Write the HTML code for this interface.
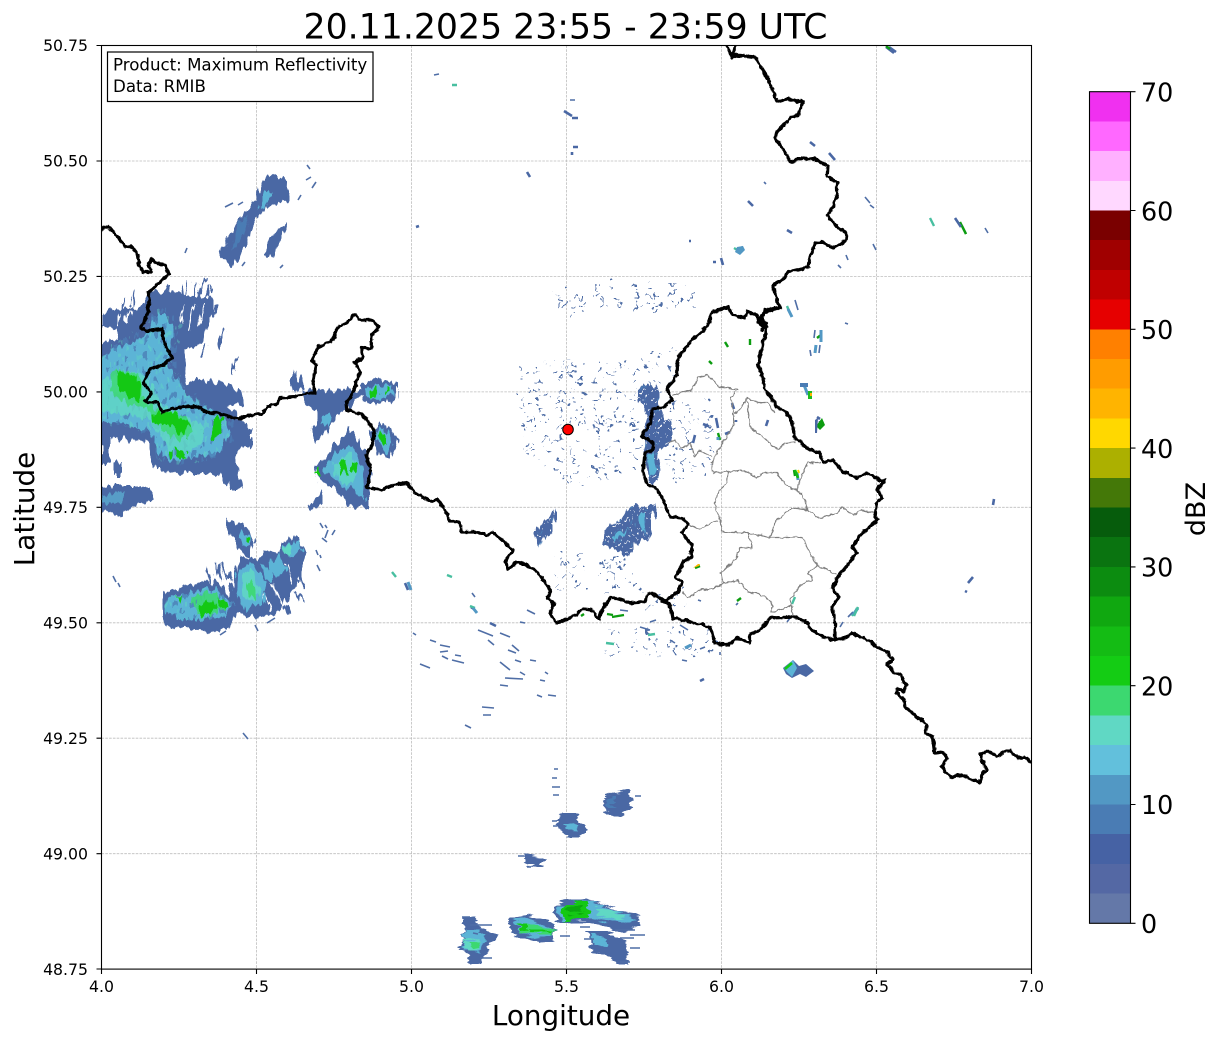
<!DOCTYPE html>
<html><head><meta charset="utf-8"><title>Radar</title>
<style>
html,body{margin:0;padding:0;background:#fff}
svg{display:block}
text{font-family:"DejaVu Sans","Liberation Sans",sans-serif;fill:#000}
.tk{font-size:15.7px}
.cb{font-size:25.4px}
.bl{fill:#4a68a4;stroke:#4a68a4;stroke-width:2}
.bm{fill:#4a7cb4}
.cy{fill:#5cb4d6}
.te{fill:#60d8c4}
.lg{fill:#3cd870}
.gr{fill:#14c814}
.dg{fill:#0aa80e}
.s{fill:none;stroke:#4f6ea6;stroke-width:1.6}
.s2{fill:none;stroke:#4a68a4;stroke-width:2.6}
.st{fill:none;stroke:#48bfa0;stroke-width:2.4}
.sc{fill:none;stroke:#5298c4;stroke-width:3}
.sg{fill:none;stroke:#0c9c10;stroke-width:2.4}
.wh{fill:none;stroke:#fff;stroke-width:1.5}
.ly{fill:none;stroke:#808080;stroke-width:1.2;stroke-linejoin:round}
.bd{fill:none;stroke:#000;stroke-width:3.2;stroke-linejoin:round;stroke-linecap:round}
</style></head><body>
<svg xmlns="http://www.w3.org/2000/svg" width="1219" height="1040" viewBox="0 0 1219 1040">
<defs>
<clipPath id="ax"><rect x="101.5" y="45.5" width="930" height="923.6"/></clipPath>
<filter id="rv" filterUnits="userSpaceOnUse" x="60" y="20" width="1010" height="990" color-interpolation-filters="sRGB">
<feTurbulence type="fractalNoise" baseFrequency="0.22 0.05" numOctaves="2" seed="4"/>
<feDisplacementMap in="SourceGraphic" scale="13" xChannelSelector="R" yChannelSelector="G"/>
</filter>
<filter id="rh" filterUnits="userSpaceOnUse" x="60" y="20" width="1010" height="990" color-interpolation-filters="sRGB">
<feTurbulence type="fractalNoise" baseFrequency="0.04 0.28" numOctaves="2" seed="9"/>
<feDisplacementMap in="SourceGraphic" scale="11" xChannelSelector="R" yChannelSelector="G"/>
</filter>
<filter id="rs" filterUnits="userSpaceOnUse" x="60" y="20" width="1010" height="990" color-interpolation-filters="sRGB">
<feTurbulence type="fractalNoise" baseFrequency="0.14" numOctaves="2" seed="2"/>
<feDisplacementMap in="SourceGraphic" scale="22" xChannelSelector="R" yChannelSelector="G"/>
</filter>
<filter id="rb" filterUnits="userSpaceOnUse" x="60" y="20" width="1010" height="990" color-interpolation-filters="sRGB">
<feTurbulence type="fractalNoise" baseFrequency="0.2" numOctaves="2" seed="7"/>
<feDisplacementMap in="SourceGraphic" scale="4" xChannelSelector="R" yChannelSelector="G"/>
</filter>
<pattern id="sp" width="37" height="29" patternUnits="userSpaceOnUse">
<g fill="#4f6ea6"><rect x="2" y="3" width="4" height="2"/><rect x="22" y="5" width="5" height="2"/><rect x="7" y="12" width="2.4" height="3.2"/><rect x="27" y="15" width="2.4" height="2.6"/><rect x="3" y="23" width="5" height="2"/><rect x="17" y="24" width="3.4" height="2"/><rect x="14" y="13" width="3" height="2"/></g>
</pattern>
<pattern id="spd" width="13" height="11" patternUnits="userSpaceOnUse">
<rect width="13" height="11" fill="#4a68a4"/><g fill="#fff"><rect x="2" y="2" width="2" height="1"/><rect x="9" y="1" width="1" height="2"/><rect x="5" y="7" width="2" height="1"/><rect x="11" y="8" width="1" height="1"/></g><rect x="6" y="3" width="3" height="2" fill="#4a7cb4"/>
</pattern>
<pattern id="tx" width="19" height="15" patternUnits="userSpaceOnUse">
<g fill="#4a7cb4" opacity=".75"><rect x="1" y="1" width="4" height="6"/><rect x="11" y="8" width="3" height="6"/></g><rect x="15" y="2" width="2" height="5" fill="#60d8c4" opacity=".5"/><rect x="6" y="10" width="3" height="4" fill="#60d8c4" opacity=".4"/>
</pattern>
</defs>

<!-- grid -->
<g stroke="#bdbdbd" stroke-width="0.8" stroke-dasharray="2.6 1.2" fill="none">
<path d="M256.5 45.5V969M411.5 45.5V969M566.5 45.5V969M721.5 45.5V969M876.5 45.5V969"/>
<path d="M101.5 161H1031.5M101.5 276.4H1031.5M101.5 391.9H1031.5M101.5 507.3H1031.5M101.5 622.8H1031.5M101.5 738.2H1031.5M101.5 853.7H1031.5"/>
</g>

<g clip-path="url(#ax)">
<!-- speckle fields -->
<g filter="url(#rs)">
<path fill="url(#sp)" d="M518 372L560 362L635 358L640 470L610 482L560 478L525 450Z"/>
<path fill="url(#sp)" d="M558 292L620 278L700 288L700 312L630 305L565 318Z"/>
<path fill="url(#sp)" d="M640 345L675 345L668 400L640 400Z"/>
<path fill="url(#sp)" d="M665 400L712 400L716 470L672 482Z"/>
<path fill="url(#sp)" d="M558 548L590 548L585 590L560 590Z"/>
<path fill="url(#sp)" d="M592 558L625 555L640 590L606 595Z"/>
<path fill="url(#sp)" d="M600 628L720 632L715 660L610 658Z"/>
<path fill="url(#sp)" d="M640 590L690 590L680 612L650 612Z"/>
</g>

<!-- north / west echoes, radial near-vertical streaks -->
<g filter="url(#rv)">
<path class="bl" d="M101 313L120 310L143 307L150 293L170 293L190 296L213 300L213 313L200 343L183 350L185 383L213 387L227 407L250 430L250 443L233 457L242 487L230 487L220 473L190 473L160 470L153 460L147 440L110 437L110 462L101 462Z"/>
<path d="M101 328L115 326L118 340L101 342Z" fill="#fff"/>
<path class="wh" d="M185 305l-5 20M195 305l-8 25M205 305l-8 22M120 312l-3 12M130 310l-4 12M196 385l4 0"/>
<path class="cy" d="M101 357L143 337L160 312L172 325L170 367L183 390L207 410L224 414L228 438L213 455L173 461L160 455L150 430L107 422L101 422Z"/>
<path fill="url(#tx)" d="M101 350L143 330L160 305L180 318L176 370L187 392L210 408L230 413L233 440L215 460L173 465L157 460L150 433L107 425L101 425Z"/>
<path class="te" d="M101 380L135 372L148 378L160 400L172 412L205 425L200 445L175 455L162 440L150 420L115 412L101 410Z" opacity=".8"/>
<path class="lg" d="M112 372L140 374L143 395L152 408L185 415L195 432L178 440L160 428L148 410L125 403L110 390Z" opacity=".8"/>
<path class="gr" d="M117 373L138 377L140 390L138 402L123 393L117 387Z"/>
<path class="gr" d="M152 412L173 413L190 423L187 437L177 433L167 423L153 422Z"/>
<path class="gr" d="M215 417L223 417L220 433L213 443L210 437Z"/>
<path class="gr" d="M173 450L187 452L187 458L173 458Z"/>
<path class="bl" d="M101 487L147 487L152 500L127 507L123 515L101 508Z"/>
<path class="cy" d="M101 495L125 493L122 503L101 503Z" opacity=".7"/>
<path class="bl" d="M116 463L121 463L121 476L116 476Z"/>
<path class="bl" d="M185 383L200 380L222 384L242 392L243 402L225 404L210 388Z"/>
<path class="bl" d="M231 393L241 393L243 405L233 404Z"/>
<path class="s2" d="M125 300l-4 14M135 292l-5 14M170 285l-3 10M188 280l-5 16M198 285l-6 16M205 277l-6 20M210 287l-5 14M218 305l-3 10M222 335l-3 8M225 330l-3 9M205 345l-3 10M220 340l-3 10M236 358l-2 15"/>
<path class="bl" d="M270 175L288 182L287 200L263 208L248 230L245 247L233 265L223 257L227 240L240 220L257 200L262 183Z"/>
<path class="cy" d="M263 195L272 190L266 206L258 208Z"/>
<path class="bm" d="M240 222L248 215L242 238L232 250L235 235Z"/>
<path class="bl" d="M288 223L278 243L270 257L263 253L272 237Z"/>
<path class="bl" d="M290 380L297 372L302 390L293 393Z"/>
<path class="bl" d="M302 393L325 392L350 390L362 393L347 407L337 413L328 430L317 440L313 430L320 413L307 403Z"/>
<path class="cy" d="M323 415L332 416L328 428L320 425Z"/>
<path class="bl" d="M360 386L377 379L396 385L396 398L377 403L362 399Z"/>
<path class="cy" d="M364 388L380 385L394 388L394 396L378 400L365 397Z"/>
<path class="gr" d="M369 390L376 388L378 395L371 398Z"/>
<path class="gr" d="M386 388L392 389L392 394L386 395Z"/>
<path class="bl" d="M370 430L383 425L398 440L390 456L378 453L374 440Z"/>
<path class="cy" d="M374 432L384 428L393 442L385 452L378 445Z"/>
<path class="gr" d="M378 434L386 433L386 444L380 442Z"/>
<path class="bl" d="M315 470L333 450L350 430L363 447L370 470L370 511L353 505L333 487L320 480Z"/>
<path class="cy" d="M325 468L340 450L352 445L362 468L366 500L350 490L335 480Z"/>
<path class="te" d="M333 465L350 452L358 470L352 485L338 480Z" opacity=".8"/>
<path class="gr" d="M340 461L346 460L348 472L340 476Z"/>
<path class="gr" d="M352 462L358 464L357 472L352 470Z"/>
<path class="gr" d="M316 470L320 468L320 476L316 476Z"/>
<path class="bl" d="M310 507L320 495L323 503L315 510Z"/>
<path class="bl" d="M162 593L183 588L195 587L205 582L220 583L230 600L235 580L240 558L260 560L265 550L280 557L283 543L297 537L305 553L297 587L283 603L277 610L257 617L240 610L227 627L207 630L183 627L167 625L163 617Z"/>
<path class="wh" d="M272 582l10 22M285 565l8 20M262 590l8 20"/>
<path class="cy" d="M168 597L187 593L217 588L233 605L223 617L200 620L177 620L167 610Z"/>
<path fill="url(#tx)" d="M168 597L187 593L217 588L233 605L223 617L200 620L177 620L167 610Z"/>
<path class="lg" d="M192 596L216 592L228 606L213 616L197 616Z" opacity=".85"/>
<path class="gr" d="M200 605L213 600L217 610L207 617L202 613Z"/>
<path class="gr" d="M218 597L227 603L228 610L220 608Z"/>
<path class="gr" d="M177 596L182 596L181 603Z"/>
<path class="cy" d="M237 573L250 563L267 583L263 603L247 608L235 593Z"/>
<path class="cy" d="M268 562L280 556L285 570L275 578Z"/>
<path class="te" d="M243 575L252 572L262 590L254 603L245 598Z" opacity=".85"/>
<path class="lg" d="M247 580L257 587L258 600L248 597Z" opacity=".9"/>
<path class="cy" d="M262 565L272 568L274 580L266 580Z"/>
<path class="bl" d="M227 520L247 527L253 543L250 557L237 547L233 533Z"/>
<path class="cy" d="M240 535L250 533L252 545L243 547Z"/>
<path class="gr" d="M246 537L250 537L250 543L246 543Z"/>
<path class="cy" d="M283 545L300 540L302 550L290 557Z"/>
<path class="te" d="M284 546L290 544L292 552L287 555Z"/>
<path class="s2" d="M165 590l4 8M185 585l6 8M207 568l4 14M217 563l4 16M222 562l5 18M228 573l3 8M300 580l6 9M296 593l8 9M285 605l4 8"/>
<path fill="url(#spd)" d="M638 390L653 383L658 393L660 410L670 423L670 443L660 450L657 483L647 483L643 453L648 413L640 403Z"/>
<path class="cy" d="M647 455L654 452L656 470L650 476Z"/>
<path fill="url(#spd)" d="M600 545L610 528L627 513L635 505L653 507L653 537L637 543L627 557L613 550Z"/>
<path class="cy" d="M612 537L630 528L625 534L615 541Z"/>
<path class="cy" d="M637 515L643 513L645 530L640 532Z"/>
<path fill="url(#spd)" d="M533 533L545 520L555 512L552 530L540 545Z"/>
</g>

<!-- southern echoes, radial near-horizontal streaks -->
<g filter="url(#rh)">
<path class="bl" d="M605 797L615 792L629 791L630 805L622 815L607 812Z"/>
<path class="bm" d="M607 798L615 795L615 806L608 806Z"/>
<path class="bl" d="M558 818L565 813L576 813L578 823L584 826L584 832L577 836L564 836L562 830L558 827Z"/>
<path class="cy" d="M565 822L576 824L577 831L566 830Z"/>
<path class="bl" d="M525 856L545 859L540 866L528 865Z"/>
<path class="bl" d="M556 904L563 901L587 899L603 906L623 913L639 916L639 924L623 932L607 926L587 921L563 922L556 919Z"/>
<path class="cy" d="M557 905L590 901L625 914L638 920L622 924L590 918L560 920Z"/>
<path class="te" d="M596 907L610 909L625 917L618 921L597 917Z"/>
<path class="gr" d="M563 903L588 903L588 917L563 921Z"/>
<path class="dg" d="M566 906L582 905L582 912L568 914Z"/>
<path class="bl" d="M511 919L527 916L552 923L552 939L540 943L521 936L511 930Z"/>
<path class="cy" d="M514 921L527 918L551 928L551 936L537 939L520 932Z"/>
<path class="lg" d="M518 923L528 923L553 930L552 935L533 935L520 932Z"/>
<path class="gr" d="M519 923L527 923L527 931L520 930Z"/>
<path class="gr" d="M527 929L552 931L552 933L530 933Z"/>
<path class="bl" d="M589 931L607 931L626 944L626 956L627 964L620 964L610 957L591 949Z"/>
<path class="cy" d="M590 935L607 937L607 946L592 945Z"/>
<path class="bl" d="M464 918L474 916L477 927L497 935L488 946L483 962L469 964L468 953L461 950L464 937Z"/>
<path class="cy" d="M464 930L478 930L486 940L480 952L464 950Z"/>
<path class="te" d="M462 941L480 938L480 950L470 952Z"/>
<path class="lg" d="M470 941L480 942L480 948L473 949Z"/>
</g>
<path class="s" d="M552 787h8M553 795h6M552 778h5M554 769h4M635 796h6M557 821h-5M557 826h-4M518 856h6M527 867h4M492 925h-22M478 934l-5-1M492 958h-12M470 917h-8M584 939h10M560 936h10M620 938h14M630 935h15M630 948h10M630 962h-10M615 930h20M580 927h10"/>
<!-- small fringe echoes -->
<path class="s" d="M307 165l3 4M306 180l5-3M316 182l-4 6M298 200l3-5M225 207l8-4M238 205l5-3M187 248l-2 5M245 262l-3 4M280 268l3-3M320 523l3 5M328 530l-3 8M322 538l5 4M316 550l2 5M317 565l3 6M325 525l2 3M332 535l3-5M320 555l1 3M113 576l3 6M118 583l2 4M243 733l5 6M275 618l-8 5M255 625l3 6M220 635l6-4"/>
<!-- isolated echoes -->
<path class="s2" d="M889 47l7 5M564 111l8 5M572 118l6 0M573 147l5 0M572 152l0 3M527 172l3 5M829 153l6 7M810 142l5 4M748 201l5 5M737 250l6-3M787 230l5 3M721 258l2 7M713 262l3 0M689 241l2 0M416 227l3-1M968 583l5-6M967 592l-2-1M993 505l1-6M700 681l4-2M408 590l-3-7M471 607l3 2M490 623l6 3"/>
<path class="s" d="M434 75l5-1M570 100h5M865 197l5 6M870 205l4 3M873 244l3 6M838 265l3 3M846 255l2 5M795 300l3 10M815 330l-1 8M820 345l-1 8M845 323l3 1M985 228l3 5M766 184l-2-2M472 593l3 4M620 610l8 1M810 350l1 6M853 612l-5 5M843 622l-3 5M413 633l3 2M420 664l10 4M442 656l6 3M452 660l12 3M478 630l15 6M500 633l10 4M512 645l7 6M500 662l10 8M520 672l5 3M505 678l18 1M537 695l5 2M548 695l8 1M482 707l12 1M483 715l8 0M465 725l6 3M440 652l8-1M430 640l6 2M488 640l6 5M520 622l5 1M527 610l8 4M700 649l5-2M713 640l5 2M680 625l8 5M640 627l10 3M650 622l6-2M670 640l5 3M720 655l0-3M698 600l3 1M787 622l3-4M736 605l2-2M682 660l5 1M440 645l10 2M455 655l6 1M508 650l8 3M515 660l6 2M530 660l6 1M500 685l8 1M540 680l5 1M545 672l3 2"/>
<path class="st" d="M930 218l4 8M452 85l5 0M857 608l-3 6M856 610l-4 6M606 643l8 1M648 635l7-1M470 606l5 2M787 306l2 5M392 572l4 5M447 575l5 2"/>
<path class="sg" d="M960 222l6 12M750 339l0 6M725 342l3 5M709 361l3 3M737 601l4-3M607 614l6 1M794 470l1 6M700 566l-5 2M817 338l4-3M612 617l12-2M584 614l-3 2M718 433l2 7"/>
<path class="sc" d="M804 385l4 10M821 330l0 12M816 345l-1 8M858 608l-5 7M473 608l4 5M797 472l1 8M408 582l3 8M788 309l4 8M691 645l-6 3M718 437l0 3"/>
<path class="st" d="M858 607l-4 9M734 248l5 3M795 597l-3 7"/>
<path class="s2" d="M955 218l6 9M886 47l8 6M732 403l2 6M768 420l-2 6M736 420l0 2M716 418l2 10M820 427l0-6M703 424l5 2M817 417l3 2M695 435l-2 8M725 434l5-2"/>
<path class="sg" d="M886 46l4 3M962 226l4 8"/>
<rect x="800" y="383" width="8" height="4" fill="#4a7cb4"/>
<rect x="808" y="391" width="4" height="8" fill="#1dbb20"/>
<rect x="810" y="393" width="2" height="3" fill="#ffb400"/>
<path d="M816 426L822 418L825 425L820 430Z" fill="#0c9c10"/>
<path d="M815 420L818 418L817 433L815 433Z" fill="#4a68a4"/>
<path d="M693 568l6-2l1 -2l-2 0z" fill="#ffb400"/>
<path d="M795 470l3 8" stroke="#12bb12" stroke-width="2.5"/>
<path d="M798 470l1 3" stroke="#ffd800" stroke-width="2"/>
<path d="M783 668L793 660L799 666L806 664L814 671L806 677L800 674L792 678L786 674Z" fill="#4a68a4"/>
<path d="M784 668L793 660L797 668L792 677L787 672Z" fill="#5cb4d6"/>
<path d="M785 669l7-6" stroke="#14c814" stroke-width="2.5"/>
<path d="M737 247L743 246L745 250L740 255L735 252Z" fill="#5298c4"/>
</g>

<!-- admin boundaries -->
<g class="ly" filter="url(#rb)">
<path d="M673 395L692 390L698 377L708 375L720 387L738 390L731 397L733 413L734 425L720 447L712 462L713 473L728 472"/>
<path d="M734 413L738 412L747 398L758 403L768 403L775 413"/>
<path d="M747 398L750 427L763 437L778 450L785 443L795 442"/>
<path d="M668 443L675 440L682 449L690 443L695 457L700 450L712 457"/>
<path d="M728 472L742 470L748 472L757 478L763 473L777 473L782 480L788 487L797 490L803 472L807 463L820 463"/>
<path d="M797 490L805 500L807 510"/>
<path d="M728 472L727 483L718 492L715 505L720 520L722 532L748 533L770 537L775 523L785 513L793 508L807 510L820 518L837 513L842 507L853 515L862 510L875 513"/>
<path d="M687 525L700 529L718 520"/>
<path d="M770 537L802 537L810 553L817 565L838 575"/>
<path d="M748 533L752 548L740 548L735 560L721 573L723 583L738 580L748 592L763 595L773 605L770 613L792 605L793 617"/>
<path d="M723 583L715 588L700 590L688 598L683 592"/>
<path d="M817 565L808 573L813 580L800 585L790 600L792 605"/>
</g>

<!-- national borders -->
<g clip-path="url(#ax)"><g class="bd" filter="url(#rb)">
<path d="M101 229L108 226L115 234L125 246L132 247L138 255L139 265L143 272L152 272L148 263L152 259L157 264L165 265L169 274L160 282L148 293L150 300L147 315L141 328L147 331L162 329L164 342L172 358L163 365L150 369L143 383L152 393L145 401L158 403L162 412L182 407L197 406L208 413L218 413L238 419L250 415L262 414L268 406L277 404L280 398L295 397L307 393L315 393L313 380L316 365L312 360L318 347L333 340L337 328L348 322L355 314L359 320L372 320L379 327L372 335L371 349L362 347L362 358L355 362L360 372L357 380L352 395L346 403L347 410L362 414L374 430L373 443L366 455L371 470L367 487L382 490L393 485L407 483L415 493L430 501L438 500L448 515L449 522L457 522L460 523L462 532L475 532L487 535L493 532L513 550L506 560L508 569L517 562L533 568L545 582L551 592L548 598L554 605L550 613L556 623L573 617L583 609L592 610L599 619L602 610L610 598L617 598L630 603L645 602L648 593L655 595L665 602L670 605L673 618L692 622L710 627L715 643L728 645L737 638L750 643L750 635L760 630L770 618L795 617L805 621L812 630L823 637L833 640L845 638L852 633L862 638L865 638L877 647L888 653L893 659L887 665L895 673L902 675L903 682L907 685L903 692L897 688L896 693L904 700L905 707L913 714L927 724L925 733L933 737L935 753L943 752L947 758L942 767L950 777L962 775L980 783L983 773L987 770L982 760L980 755L987 751L997 756L1008 750L1018 758L1025 757L1035 766"/>
<path d="M835 640L835 620L832 607L839 597L832 588L838 577L857 553L852 547L862 533L878 520L875 517L877 503L882 498L877 490L885 480L879 480L867 473L857 478L843 472L833 460L823 463L820 453L810 450L795 438L792 422L787 413L777 407L773 400L765 390L763 378L758 365L762 347L767 327L758 323L763 313L778 308L765 310L762 322L767 323L762 330"/>
<path d="M725 40L732 58L735 47M732 58L735 55L755 57L762 68L768 79L774 93L777 102L788 99L803 102L798 115L790 118L777 132L775 138L782 147L790 162L803 158L815 159L828 166L827 177L837 182L837 195L833 207L827 215L837 227L847 233L846 241L833 248L822 242L815 243L810 257L808 267L800 269L788 272L783 280L773 285L778 303L780 308"/>
<path d="M663 602L678 592L682 583L676 577L683 562L691 557L692 545L682 533L688 524L682 518L670 517L662 497L655 487L647 485L643 470L645 453L653 450L653 443L642 436L650 423L653 409L663 407L672 400L667 388L677 375L678 358L692 340L700 333L707 327L712 312L728 307L733 315L745 318L747 312L757 315L760 322"/>
</g></g>

<!-- axes -->
<rect x="101.5" y="45.5" width="930" height="923.6" fill="none" stroke="#000" stroke-width="1.1"/>
<g stroke="#000" stroke-width="1.1" fill="none">
<path d="M101.5 969v5M256.5 969v5M411.5 969v5M566.5 969v5M721.5 969v5M876.5 969v5M1031.5 969v5"/>
<path d="M96.5 45.5h5M96.5 161h5M96.5 276.4h5M96.5 391.9h5M96.5 507.3h5M96.5 622.8h5M96.5 738.2h5M96.5 853.7h5M96.5 969h5"/>
</g>
<g class="tk" text-anchor="end">
<text x="88" y="51">50.75</text><text x="88" y="166.5">50.50</text><text x="88" y="282">50.25</text><text x="88" y="397.5">50.00</text><text x="88" y="513">49.75</text><text x="88" y="628.5">49.50</text><text x="88" y="744">49.25</text><text x="88" y="859.5">49.00</text><text x="88" y="975">48.75</text>
</g>
<g class="tk" text-anchor="middle">
<text x="101.5" y="992">4.0</text><text x="256.5" y="992">4.5</text><text x="411.5" y="992">5.0</text><text x="566.5" y="992">5.5</text><text x="721.5" y="992">6.0</text><text x="876.5" y="992">6.5</text><text x="1031.5" y="992">7.0</text>
</g>
<text x="565.5" y="38.5" text-anchor="middle" font-size="34.7">20.11.2025 23:55 - 23:59 UTC</text>
<text x="561" y="1025" text-anchor="middle" font-size="27.8">Longitude</text>
<text transform="translate(34,509) rotate(-90)" text-anchor="middle" font-size="27.8">Latitude</text>

<!-- info box -->
<rect x="107.5" y="52" width="265.5" height="49.5" fill="#fff" stroke="#000" stroke-width="1.2"/>
<text x="113" y="70.5" font-size="16.65">Product: Maximum Reflectivity</text>
<text x="113" y="92" font-size="16.65">Data: RMIB</text>

<!-- radar marker -->
<circle cx="568" cy="429.5" r="5.3" fill="#f00" stroke="#000" stroke-width="1"/>

<!-- colorbar -->
<g shape-rendering="crispEdges">
<rect x="1089.5" y="893.6" width="41" height="29.7" fill="#6478a8"/>
<rect x="1089.5" y="863.9" width="41" height="29.7" fill="#5468a4"/>
<rect x="1089.5" y="834.2" width="41" height="29.7" fill="#4662a4"/>
<rect x="1089.5" y="804.5" width="41" height="29.7" fill="#4a7cb4"/>
<rect x="1089.5" y="774.8" width="41" height="29.7" fill="#5298c4"/>
<rect x="1089.5" y="745.1" width="41" height="29.7" fill="#62c0dc"/>
<rect x="1089.5" y="715.4" width="41" height="29.7" fill="#60d8c4"/>
<rect x="1089.5" y="685.7" width="41" height="29.7" fill="#3cd870"/>
<rect x="1089.5" y="656" width="41" height="29.7" fill="#14cc14"/>
<rect x="1089.5" y="626.3" width="41" height="29.7" fill="#14bc14"/>
<rect x="1089.5" y="596.6" width="41" height="29.7" fill="#10a810"/>
<rect x="1089.5" y="566.9" width="41" height="29.7" fill="#0c8c10"/>
<rect x="1089.5" y="537.2" width="41" height="29.7" fill="#0a7410"/>
<rect x="1089.5" y="507.5" width="41" height="29.7" fill="#065c0c"/>
<rect x="1089.5" y="477.8" width="41" height="29.7" fill="#447808"/>
<rect x="1089.5" y="448.1" width="41" height="29.7" fill="#acb000"/>
<rect x="1089.5" y="418.4" width="41" height="29.7" fill="#ffd800"/>
<rect x="1089.5" y="388.7" width="41" height="29.7" fill="#ffb400"/>
<rect x="1089.5" y="359" width="41" height="29.7" fill="#ff9c00"/>
<rect x="1089.5" y="329.3" width="41" height="29.7" fill="#ff8000"/>
<rect x="1089.5" y="299.6" width="41" height="29.7" fill="#e60000"/>
<rect x="1089.5" y="269.9" width="41" height="29.7" fill="#c00000"/>
<rect x="1089.5" y="240.2" width="41" height="29.7" fill="#a00000"/>
<rect x="1089.5" y="210.5" width="41" height="29.7" fill="#7a0000"/>
<rect x="1089.5" y="180.8" width="41" height="29.7" fill="#ffd8ff"/>
<rect x="1089.5" y="151.1" width="41" height="29.7" fill="#ffb0ff"/>
<rect x="1089.5" y="121.4" width="41" height="29.7" fill="#ff68ff"/>
<rect x="1089.5" y="91.7" width="41" height="29.7" fill="#f030f0"/>
</g>
<rect x="1089.5" y="91.7" width="41" height="831.6" fill="none" stroke="#000" stroke-width="1.1"/>
<path d="M1130.5 91.7h5M1130.5 210.5h5M1130.5 329.3h5M1130.5 448.1h5M1130.5 566.9h5M1130.5 685.7h5M1130.5 804.5h5M1130.5 923.3h5" stroke="#000" stroke-width="1.1" fill="none"/>
<g class="cb">
<text x="1141" y="101.5">70</text><text x="1141" y="220.5">60</text><text x="1141" y="339">50</text><text x="1141" y="458">40</text><text x="1141" y="576.5">30</text><text x="1141" y="695.5">20</text><text x="1141" y="814">10</text><text x="1141" y="933">0</text>
</g>
<text transform="translate(1205,509) rotate(-90)" text-anchor="middle" font-size="27">dBZ</text>
</svg>
</body></html>
